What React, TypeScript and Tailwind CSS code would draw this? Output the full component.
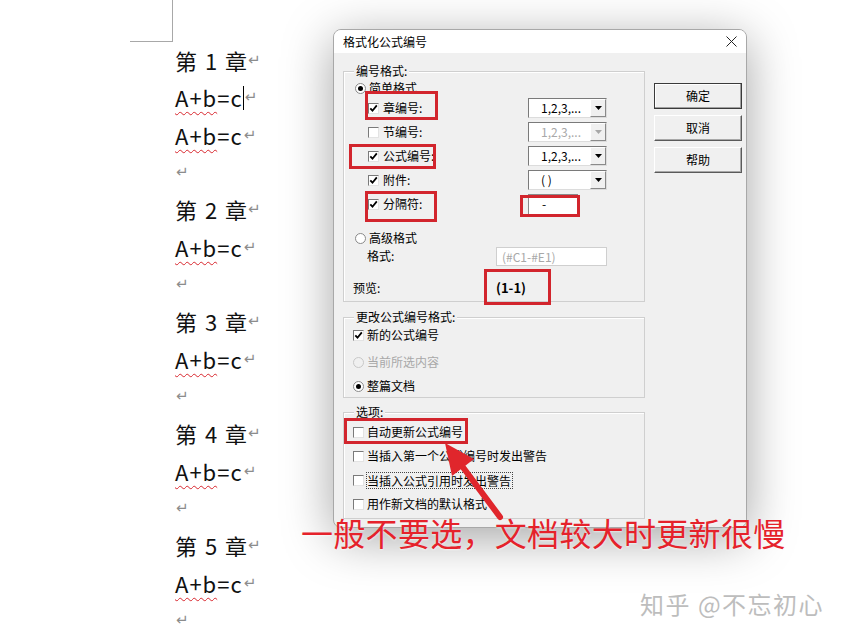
import React from "react";

const CJK = "font-['Noto_Sans_CJK_SC','Noto_Sans',sans-serif]";

function Mark() {
  return (
    <span className="text-[#8c8c8c] text-[15px] font-['DejaVu_Sans',sans-serif] ml-[1px] leading-none tracking-normal">
      ↵
    </span>
  );
}

function Line({ children }: { children?: React.ReactNode }) {
  return <div className="h-[37.33px] flex items-center whitespace-pre">{children}</div>;
}

function Chapter({ n }: { n: number }) {
  return (
    <Line>
      <span className="[word-spacing:3px]">{`第 ${n} 章`}</span>
      <Mark />
    </Line>
  );
}

function Eq({ cursor }: { cursor?: boolean }) {
  return (
    <Line>
      <span className="tracking-[1px] underline decoration-wavy decoration-[#d8262d] decoration-[1px] underline-offset-[4px]">
        A+b
      </span>
      <span className="tracking-[1px]">=c</span>
      {cursor && <span className="inline-block w-px h-[24px] bg-black" />}
      <Mark />
    </Line>
  );
}

function Check({ checked }: { checked?: boolean }) {
  return (
    <span className="w-[11px] h-[11px] shrink-0 bg-white border border-t-[#7a7a7a] border-l-[#7a7a7a] border-r-[#e3e3e3] border-b-[#e3e3e3] flex items-center justify-center">
      {checked && (
        <svg width="9" height="9" viewBox="0 0 9 9">
          <path d="M1.3 4.3 L3.5 6.7 L7.8 1.4" fill="none" stroke="#000" strokeWidth="1.8" />
        </svg>
      )}
    </span>
  );
}

function Radio({ checked, disabled }: { checked?: boolean; disabled?: boolean }) {
  return (
    <span
      className={`w-[11px] h-[11px] shrink-0 rounded-full border flex items-center justify-center ${
        disabled ? "border-[#c8c8c8] bg-[#f0f0f0]" : "border-[#8a8a8a] bg-white"
      }`}
    >
      {checked && <span className="w-[5px] h-[5px] rounded-full bg-black" />}
    </span>
  );
}

function Dropdown({ value, disabled }: { value: string; disabled?: boolean }) {
  return (
    <div className="w-[79px] h-[20px] flex bg-white border border-t-[#7a7a7a] border-l-[#7a7a7a] border-r-[#dcdcdc] border-b-[#dcdcdc]">
      <span
        className={`flex-1 pl-[12px] text-[12px] leading-[18px] ${disabled ? "text-[#a8a8a8]" : "text-black"}`}
      >
        {value}
      </span>
      <span className="w-[16px] h-full bg-[#f0f0f0] border border-t-[#fff] border-l-[#fff] border-r-[#8a8a8a] border-b-[#8a8a8a] flex items-center justify-center">
        <svg width="7" height="4" viewBox="0 0 7 4">
          <path d="M0 0 L7 0 L3.5 4 Z" fill={disabled ? "#a8a8a8" : "#000"} />
        </svg>
      </span>
    </div>
  );
}

function CheckRow({ label, value, disabled, checked }: { label: string; value: string; disabled?: boolean; checked?: boolean }) {
  return (
    <div className="h-[24px] flex items-center pl-[24px]">
      <div className="w-[160px] flex items-center gap-[4px]">
        <Check checked={checked} />
        <span>{label}</span>
      </div>
      <Dropdown value={value} disabled={disabled} />
    </div>
  );
}

function GroupLabel({ children }: { children: React.ReactNode }) {
  return (
    <span className="absolute left-[10px] top-[-9px] bg-[#f0f0f0] px-[2px] text-[12px] leading-[16px]">
      {children}
    </span>
  );
}

function Button({ label, primary }: { label: string; primary?: boolean }) {
  return (
    <div
      className={`w-[88px] h-[26px] flex items-center justify-center text-[12px] bg-[#f0f0f0] ${
        primary
          ? "border border-[#3a3a3a] shadow-[inset_-1px_-1px_0_#a0a0a0,inset_1px_1px_0_#ffffff]"
          : "border border-t-[#ffffff] border-l-[#ffffff] border-r-[#5a5a5a] border-b-[#5a5a5a] shadow-[inset_-1px_-1px_0_#a8a8a8]"
      }`}
    >
      {label}
    </div>
  );
}

function RedBox({ cls }: { cls: string }) {
  return <div className={`absolute border-[3px] border-[#d2252d] ${cls}`} />;
}

export default function App() {
  return (
    <div className={`relative w-[843px] h-[638px] bg-white overflow-hidden text-black ${CJK}`}>
      <div className="flex">
        {/* document */}
        <div className="w-[333px] shrink-0 pl-[130px]">
          <div className="w-[43px] h-[42px] border-r border-b border-[#a8a8a8]" />
          <div className="pl-[45px] text-[22px] text-[#111]">
            <Chapter n={1} />
            <Eq cursor />
            <Eq />
            <Line>
              <Mark />
            </Line>
            <Chapter n={2} />
            <Eq />
            <Line>
              <Mark />
            </Line>
            <Chapter n={3} />
            <Eq />
            <Line>
              <Mark />
            </Line>
            <Chapter n={4} />
            <Eq />
            <Line>
              <Mark />
            </Line>
            <Chapter n={5} />
            <Eq />
            <Line>
              <Mark />
            </Line>
          </div>
        </div>

        {/* dialog */}
        <div className="mt-[29px] w-[414px] h-[499px] shrink-0 bg-[#f0f0f0] border border-[#a8a8a8] rounded-[8px] overflow-hidden shadow-[0_10px_50px_rgba(0,0,0,0.36)] flex flex-col text-[12px]">
          <div className="h-[23px] shrink-0 bg-white flex items-center justify-between pl-[9px] pr-[9px]">
            <span className="text-[12px] leading-none">格式化公式编号</span>
            <svg width="11" height="11" viewBox="0 0 11 11">
              <path d="M0.5 0.5 L10.5 10.5 M10.5 0.5 L0.5 10.5" stroke="#222" strokeWidth="1" />
            </svg>
          </div>
          <div className="flex pl-[9px] pt-[18px] gap-[9px]">
            <div className="w-[302px] shrink-0 flex flex-col">
              {/* group 1 */}
              <div className="relative h-[231px] border border-[#cfcfcf] shadow-[inset_1px_1px_0_#ffffff] pt-[8px]">
                <GroupLabel>编号格式:</GroupLabel>
                <div className="h-[16px] flex items-center pl-[11px] gap-[3px]">
                  <Radio checked />
                  <span>简单格式</span>
                </div>
                <CheckRow label="章编号:" value="1,2,3,..." checked />
                <CheckRow label="节编号:" value="1,2,3,..." disabled />
                <CheckRow label="公式编号:" value="1,2,3,..." checked />
                <CheckRow label="附件:" value="( )" checked />
                <div className="h-[24px] flex items-center pl-[24px]">
                  <div className="w-[160px] flex items-center gap-[4px]">
                    <Check checked />
                    <span>分隔符:</span>
                  </div>
                  <div className="w-[50px] h-[20px] bg-white border-l border-t border-[#8a8a8a] pl-[13px] text-[12px] leading-[18px]">
                    -
                  </div>
                </div>
                <div className="mt-[14px] h-[16px] flex items-center pl-[11px] gap-[3px]">
                  <Radio />
                  <span>高级格式</span>
                </div>
                <div className="h-[20px] flex items-center pl-[23px]">
                  <span className="w-[129px]">格式:</span>
                  <div className="w-[111px] h-[19px] bg-white border border-[#cfcfcf] pl-[5px] text-[12px] leading-[17px] text-[#a8a8a8]">
                    (#C1-#E1)
                  </div>
                </div>
                <div className="mt-[12px] h-[20px] flex items-center pl-[9px]">
                  <span className="w-[143px]">预览:</span>
                  <span className="text-[13px] font-bold">(1-1)</span>
                </div>
              </div>

              {/* group 2 */}
              <div className="relative mt-[15px] h-[81px] border border-[#cfcfcf] shadow-[inset_1px_1px_0_#ffffff] pt-[9px]">
                <GroupLabel>更改公式编号格式:</GroupLabel>
                <div className="h-[16px] flex items-center pl-[9px] gap-[3px]">
                  <Check checked />
                  <span>新的公式编号</span>
                </div>
                <div className="mt-[11px] h-[16px] flex items-center pl-[9px] gap-[3px]">
                  <Radio disabled />
                  <span className="text-[#a8a8a8]">当前所选内容</span>
                </div>
                <div className="mt-[8px] h-[16px] flex items-center pl-[9px] gap-[3px]">
                  <Radio checked />
                  <span>整篇文档</span>
                </div>
              </div>

              {/* group 3 */}
              <div className="relative mt-[14px] h-[107px] border border-[#cfcfcf] shadow-[inset_1px_1px_0_#ffffff] pt-[7px]">
                <GroupLabel>选项:</GroupLabel>
                <div className="h-[24px] flex items-center pl-[9px] gap-[3px]">
                  <Check />
                  <span>自动更新公式编号</span>
                </div>
                <div className="h-[24px] flex items-center pl-[9px] gap-[3px]">
                  <Check />
                  <span>当插入第一个公式编号时发出警告</span>
                </div>
                <div className="h-[24px] flex items-center pl-[9px] gap-[2px]">
                  <Check />
                  <span className="border border-dotted border-[#444] h-[17px] leading-[15px] pr-[1px]">
                    当插入公式引用时发出警告
                  </span>
                </div>
                <div className="h-[24px] flex items-center pl-[9px] gap-[3px]">
                  <Check />
                  <span>用作新文档的默认格式</span>
                </div>
              </div>
            </div>

            <div className="flex flex-col gap-[6px] pt-[12px]">
              <Button label="确定" primary />
              <Button label="取消" />
              <Button label="帮助" />
            </div>
          </div>
        </div>
      </div>

      {/* annotations */}
      <RedBox cls="left-[365px] top-[91px] w-[73px] h-[29px]" />
      <RedBox cls="left-[349px] top-[144px] w-[87px] h-[25px]" />
      <RedBox cls="left-[365px] top-[191px] w-[72px] h-[31px]" />
      <RedBox cls="left-[520px] top-[195px] w-[60px] h-[22px]" />
      <RedBox cls="left-[484px] top-[269px] w-[67px] h-[36px]" />
      <RedBox cls="left-[344px] top-[418px] w-[124px] h-[26px]" />

      <svg className="absolute left-[430px] top-[430px]" width="90" height="100" viewBox="0 0 90 100">
        <line x1="32" y1="36" x2="70" y2="87" stroke="#e0262c" strokeWidth="6" strokeLinecap="round" />
        <polygon points="15,13 22,46 44,29" fill="#e0262c" />
      </svg>

      <div className="absolute left-[301px] top-[512px] text-[32px] leading-[40px] tracking-[0.3px] text-[#e5222b] whitespace-nowrap [text-shadow:0_1px_2px_rgba(255,255,255,0.6)]">
        一般不要选，文档较大时更新很慢
      </div>

      <div className="absolute left-[640px] top-[588px] text-[24px] leading-[32px] tracking-[1.5px] text-[#bdbdbd] whitespace-nowrap">
        知乎 @不忘初心
      </div>
    </div>
  );
}
